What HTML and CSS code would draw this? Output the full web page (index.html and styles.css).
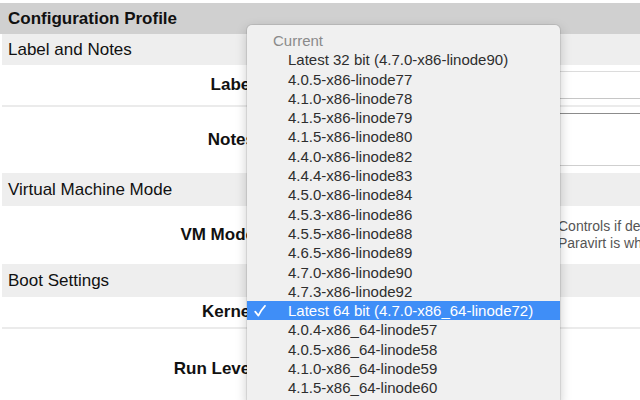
FILE: index.html
```html
<!DOCTYPE html>
<html>
<head>
<meta charset="utf-8">
<link rel="stylesheet" href="styles.css">
</head>
<body>
<div class="page">
  <div class="title">Configuration Profile</div>
  <div class="form">
    <div class="section">Label and Notes</div>
    <div class="row row-label divided">
      <div class="lbl">Label</div>
      <div class="field"><input class="text-input" type="text" value=""></div>
    </div>
    <div class="row row-notes">
      <div class="lbl">Notes</div>
      <div class="field"><textarea class="notes-input"></textarea></div>
    </div>
    <div class="section tall">Virtual Machine Mode</div>
    <div class="row row-vm">
      <div class="lbl">VM Mode</div>
      <div class="field field-mid">
        <div class="radios">
          <input class="radio" type="radio" name="vm">
          <input class="radio" type="radio" name="vm" checked>
        </div>
        <div class="desc">Controls if devices inside your virtual machine are emulated or paravirtualized.<br>Paravirt is what you want, unless you're doing something special.</div>
      </div>
    </div>
    <div class="section tall">Boot Settings</div>
    <div class="row row-kernel divided">
      <div class="lbl">Kernel</div>
      <div class="field"></div>
    </div>
    <div class="row row-run">
      <div class="lbl">Run Level</div>
      <div class="field"></div>
    </div>
  </div>

  <div class="menu">
    <div class="menu-head">Current</div>
    <div class="item">Latest 32 bit (4.7.0-x86-linode90)</div>
    <div class="item">4.0.5-x86-linode77</div>
    <div class="item">4.1.0-x86-linode78</div>
    <div class="item">4.1.5-x86-linode79</div>
    <div class="item">4.1.5-x86-linode80</div>
    <div class="item">4.4.0-x86-linode82</div>
    <div class="item">4.4.4-x86-linode83</div>
    <div class="item">4.5.0-x86-linode84</div>
    <div class="item">4.5.3-x86-linode86</div>
    <div class="item">4.5.5-x86-linode88</div>
    <div class="item">4.6.5-x86-linode89</div>
    <div class="item">4.7.0-x86-linode90</div>
    <div class="item">4.7.3-x86-linode92</div>
    <div class="item sel"><svg class="check" width="12" height="12" viewBox="0 0 12 12"><path d="M1.2 6.6 L4.4 10.6 Q7 5 11 0.8" fill="none" stroke="#fff" stroke-width="1.7" stroke-linecap="round" stroke-linejoin="round"/></svg>Latest 64 bit (4.7.0-x86_64-linode72)</div>
    <div class="item">4.0.4-x86_64-linode57</div>
    <div class="item">4.0.5-x86_64-linode58</div>
    <div class="item">4.1.0-x86_64-linode59</div>
    <div class="item">4.1.5-x86_64-linode60</div>
  </div>
</div>
</body>
</html>
```

FILE: styles.css
```css
html, body {
  margin: 0;
  padding: 0;
}
body {
  font-family: "Liberation Sans", Arial, Helvetica, sans-serif;
  color: #111;
  background: #fff;
  width: 640px;
  height: 400px;
  overflow: hidden;
}
.page {
  position: relative;
  padding-top: 3px;
  height: 397px;
  overflow: hidden;
}
.title {
  height: 31px;
  line-height: 31px;
  background: #d0d0d0;
  font-weight: bold;
  font-size: 17px;
  padding-left: 8px;
}
.form {
  margin-left: 2px;
}
.section {
  height: 31px;
  line-height: 32px;
  background: #eeeeee;
  font-size: 17px;
  padding-left: 6px;
}
.section.tall {
  height: 33px;
  line-height: 34px;
}
.row {
  display: flex;
  align-items: center;
}
.row.divided {
  border-bottom: 2px solid #ebebeb;
}
.row-label { height: 40px; }
.row-notes { height: 66px; }
.row-vm { height: 58px; }
.row-kernel { height: 30px; }
.row-run { height: 80px; }
.lbl {
  flex: none;
  width: 256px;
  box-sizing: border-box;
  padding-right: 3px;
  text-align: right;
  font-weight: bold;
  font-size: 17px;
}
.field {
  flex: 1;
  align-self: stretch;
  display: flex;
  align-items: flex-start;
  padding-left: 10px;
  padding-top: 6px;
  overflow: hidden;
  min-width: 0;
}
.field-mid {
  padding-top: 0;
  align-items: center;
}
.text-input {
  flex: none;
  -webkit-appearance: none;
  appearance: none;
  margin: 0;
  padding: 0 4px;
  width: 420px;
  height: 28px;
  box-sizing: border-box;
  border: 1px solid #dcdcdc;
  border-bottom-color: #c6c6c6;
  background: #fff;
  font: 14px "Liberation Sans", Arial, sans-serif;
}
.notes-input {
  flex: none;
  margin: 0;
  padding: 0;
  width: 420px;
  height: 53px;
  box-sizing: border-box;
  border: 1px solid #cfcfcf;
  border-top-color: #8c8c8c;
  resize: none;
  background: #fff;
}
.radios {
  flex: none;
  width: 280px;
  display: flex;
  flex-direction: column;
}
.radio {
  margin: 2px 0;
}
.desc {
  flex: none;
  width: 560px;
  padding-left: 10px;
  font-size: 14px;
  line-height: 17px;
  color: #555;
  white-space: nowrap;
}
.menu {
  position: absolute;
  left: 247px;
  top: 25px;
  width: 313px;
  padding-top: 6px;
  padding-bottom: 6px;
  background: #f0f0f0;
  border-radius: 5px;
  box-shadow: 0 0 0 1px rgba(0, 0, 0, 0.08), 0 4px 12px rgba(0, 0, 0, 0.22);
  font-size: 15px;
  color: #2e2e2e;
}
.menu-head {
  height: 19.3px;
  line-height: 19.3px;
  padding-left: 26px;
  color: #8a8a8a;
}
.item {
  position: relative;
  height: 19.3px;
  line-height: 19.3px;
  padding-left: 41px;
  white-space: nowrap;
}
.item.sel {
  background: #3f8ef7;
  color: #fff;
}
.check {
  position: absolute;
  left: 7px;
  top: 4px;
}
```
